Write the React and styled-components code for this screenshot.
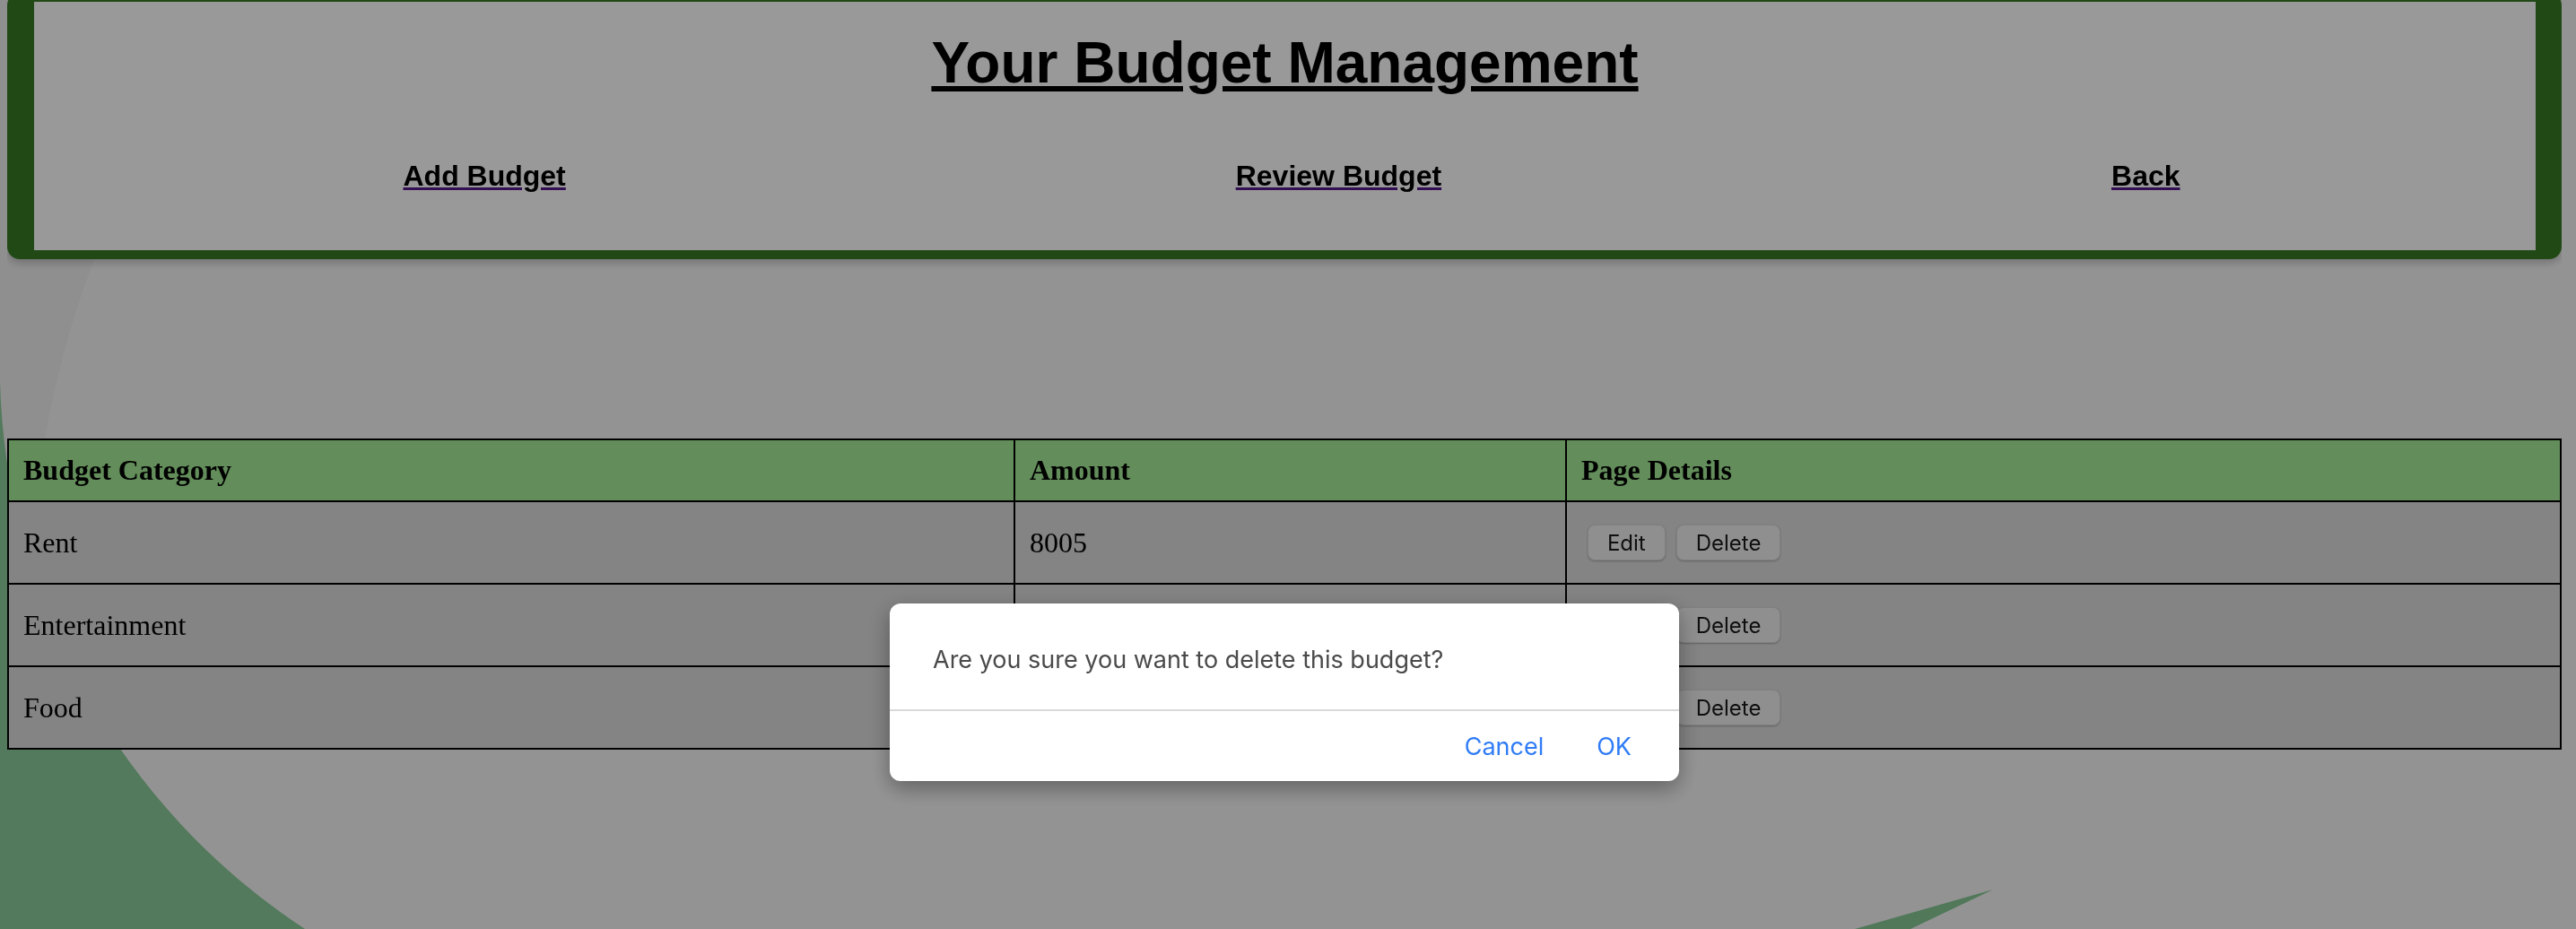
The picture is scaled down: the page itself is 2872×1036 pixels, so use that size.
import React from 'react';
import styled, { createGlobalStyle } from 'styled-components';

const GlobalStyle = createGlobalStyle`
  html, body {
    height: 100%;
  }
  body {
    margin: 0 16px 8px 8px;
    background: #f5f5f5;
    font-family: "Liberation Serif", "Times New Roman", serif;
    overflow: hidden;
  }
`;

const Backdrop = styled.svg`
  position: fixed;
  inset: 0;
  width: 100%;
  height: 100%;
  z-index: 0;
  pointer-events: none;
`;

const Page = styled.div`
  position: relative;
  z-index: 1;
`;

const Banner = styled.header`
  margin-top: -8px;
  border: solid #377b25;
  border-width: 10px 29px 10px 30px;
  border-radius: 14px;
  background: #ffffff;
  padding-top: 31px;
  box-shadow: 0 4px 10px rgba(0, 0, 0, 0.22);
  text-align: center;
  font-family: "Liberation Sans", Arial, sans-serif;
`;

const Title = styled.h1`
  margin: 0;
  font-size: 64px;
  line-height: 74px;
  font-weight: 700;
  color: #000;
  text-decoration: underline;
`;

const Nav = styled.nav`
  display: flex;
  justify-content: space-around;
  margin-top: 71px;
  padding: 0 23px 64px 38px;
`;

const NavLink = styled.a`
  font-size: 32px;
  line-height: 37px;
  font-weight: 700;
  color: #000;
  text-decoration: underline;
  text-decoration-color: #551a8b;
  cursor: pointer;
`;

const Table = styled.table`
  width: 100%;
  margin-top: 200px;
  border-collapse: collapse;
  table-layout: fixed;
  border: 2px solid #000;
  font-size: 32px;
`;

const Col = styled.col`
  width: ${(p) => p.$w};
`;

const HeadRow = styled.tr`
  height: 69px;
  background: #a5eb96;
`;

const BodyRow = styled.tr`
  height: 92px;
  background: #dcdcdc;
`;

const Th = styled.th`
  border: 2px solid #000;
  padding: 0 16px;
  text-align: left;
  font-weight: 700;
  color: #000;
`;

const Td = styled.td`
  border: 2px solid #000;
  padding: 0 16px;
  color: #000;
`;

const Actions = styled.div`
  display: flex;
  gap: 12px;
  padding-left: 7px;
`;

const RowButton = styled.button`
  height: 40px;
  padding: 0 21px;
  border: 1px solid rgba(0, 0, 0, 0.1);
  border-radius: 8px;
  background: #efefef;
  box-shadow: 0 1px 2px rgba(0, 0, 0, 0.25);
  font-family: Inter, "Liberation Sans", sans-serif;
  font-size: 24px;
  color: #1a1a1a;
`;

const Overlay = styled.div`
  position: fixed;
  inset: 0;
  z-index: 2;
  background: rgba(0, 0, 0, 0.4);
  display: flex;
  justify-content: center;
  align-items: flex-start;
  padding: 673px 8px 0 0;
`;

const Dialog = styled.div`
  width: 880px;
  background: #ffffff;
  border-radius: 12px;
  box-shadow: 0 8px 24px rgba(0, 0, 0, 0.35);
  font-family: Inter, "Liberation Sans", sans-serif;
  overflow: hidden;
`;

const Message = styled.p`
  margin: 0;
  padding: 47px 0 39px 48px;
  font-size: 27px;
  line-height: 32px;
  color: #4a4a4a;
`;

const Divider = styled.div`
  height: 2px;
  background: #d8d8d8;
`;

const DialogActions = styled.div`
  display: flex;
  justify-content: flex-end;
  gap: 59px;
  padding: 24px 53px 22px 0;
`;

const DialogButton = styled.button`
  padding: 0;
  border: none;
  background: none;
  font-family: inherit;
  font-size: 27px;
  line-height: 32px;
  color: #2f7cf6;
`;

const budgets = [
  { category: 'Rent', amount: '8005' },
  { category: 'Entertainment', amount: '' },
  { category: 'Food', amount: '' },
];

export default function App() {
  return (
    <>
      <GlobalStyle />
      <Backdrop viewBox="0 0 2872 1036" preserveAspectRatio="none">
        <rect x="0" y="0" width="2872" height="1036" fill="#f6f6f6" />
        <path d="M0 0 H275 A1039 1039 0 0 0 40 760 L0 760 Z" fill="#efefef" />
        <path d="M0 425 A754 754 0 0 0 340 1036 L0 1036 Z" fill="#8acb99" />
        <path d="M2068 1036 L2222 992 L2130 1036 Z" fill="#86c895" />
      </Backdrop>
      <Page>
        <Banner>
          <Title>Your Budget Management</Title>
          <Nav>
            <NavLink>Add Budget</NavLink>
            <NavLink>Review Budget</NavLink>
            <NavLink>Back</NavLink>
          </Nav>
        </Banner>
        <Table>
          <colgroup>
            <Col $w="39.42%" />
            <Col $w="21.61%" />
            <Col $w="38.97%" />
          </colgroup>
          <thead>
            <HeadRow>
              <Th>Budget Category</Th>
              <Th>Amount</Th>
              <Th>Page Details</Th>
            </HeadRow>
          </thead>
          <tbody>
            {budgets.map((b) => (
              <BodyRow key={b.category}>
                <Td>{b.category}</Td>
                <Td>{b.amount}</Td>
                <Td>
                  <Actions>
                    <RowButton>Edit</RowButton>
                    <RowButton>Delete</RowButton>
                  </Actions>
                </Td>
              </BodyRow>
            ))}
          </tbody>
        </Table>
      </Page>
      <Overlay>
        <Dialog>
          <Message>Are you sure you want to delete this budget?</Message>
          <Divider />
          <DialogActions>
            <DialogButton>Cancel</DialogButton>
            <DialogButton>OK</DialogButton>
          </DialogActions>
        </Dialog>
      </Overlay>
    </>
  );
}
